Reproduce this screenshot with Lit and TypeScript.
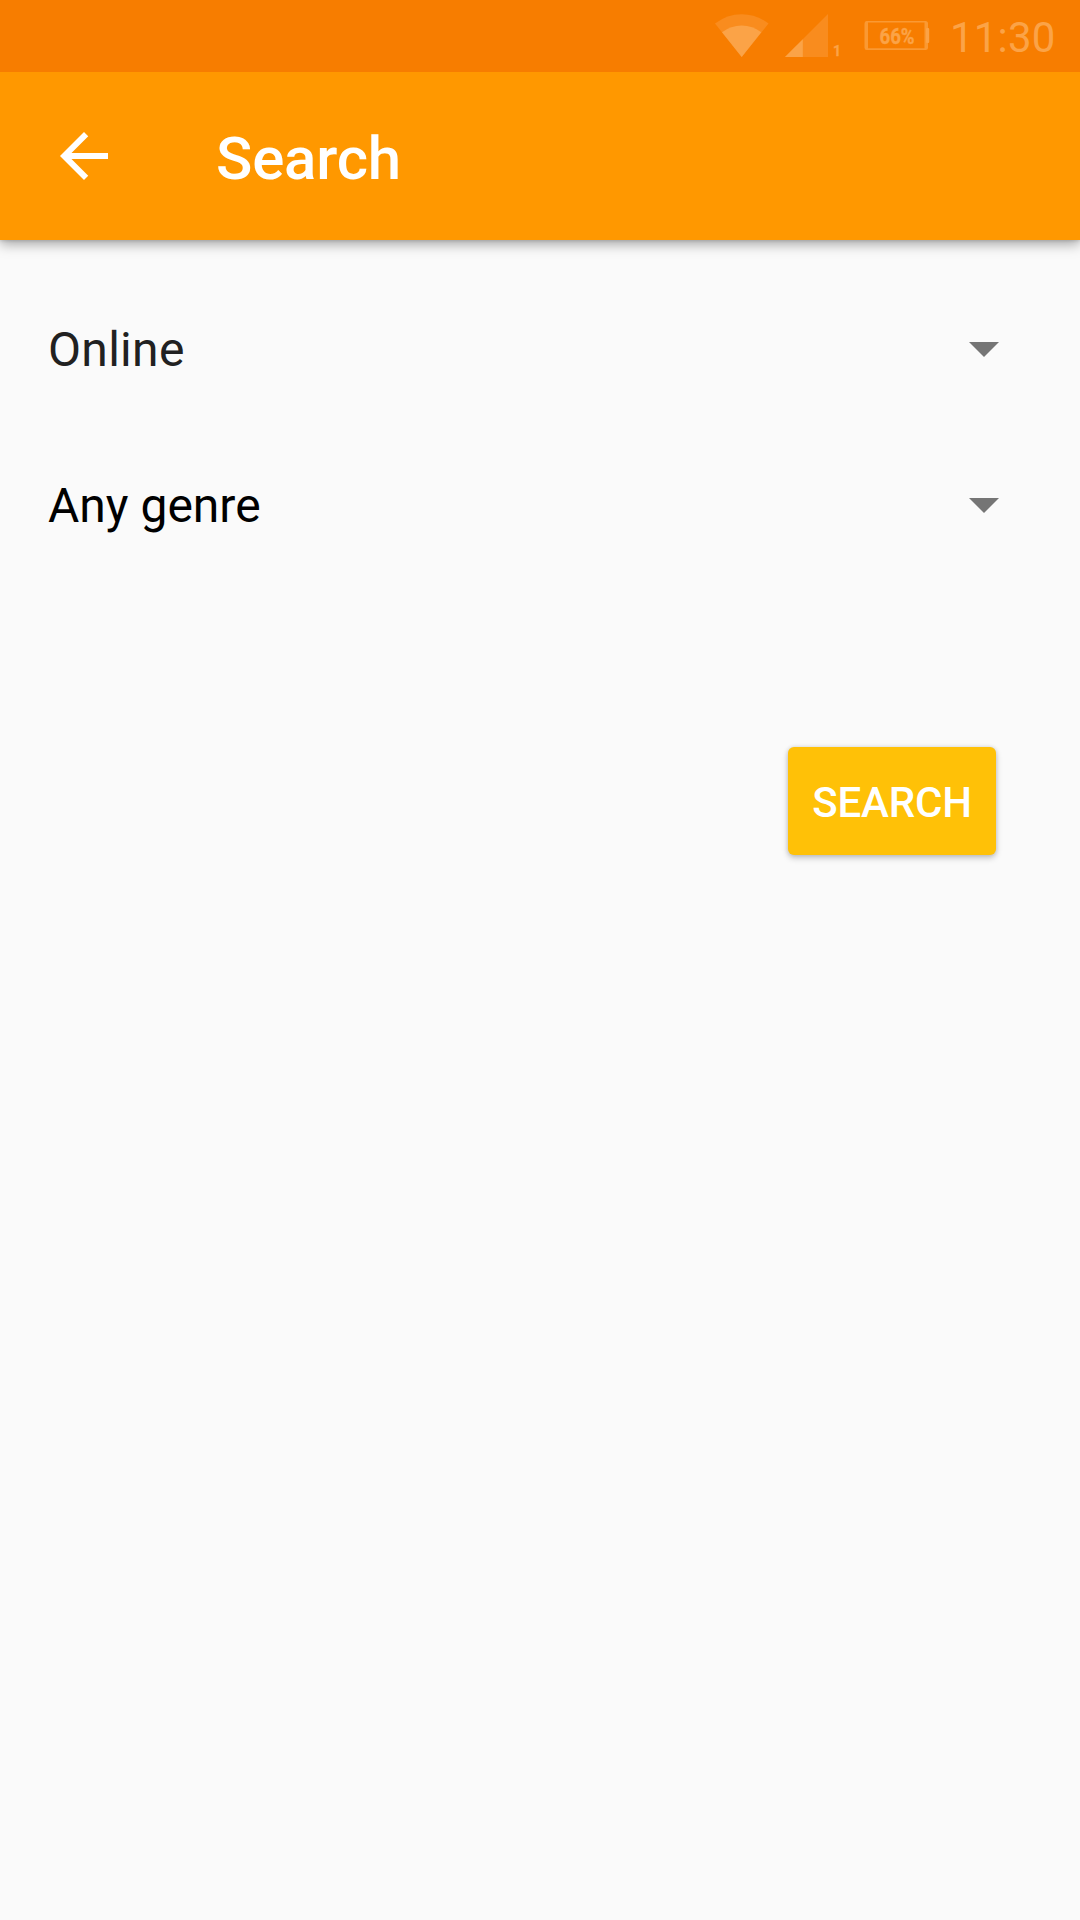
import { LitElement, html, css } from "lit";
import { customElement, property } from "lit/decorators.js";

@customElement("status-bar")
class StatusBar extends LitElement {
  static styles = css`
    :host {
      display: flex;
      justify-content: flex-end;
      position: relative;
      z-index: 1;
      height: 72px;
      background: #f77d00;
      color: #fba347;
      font-family: Roboto, sans-serif;
    }
    .icons {
      display: block;
      width: 230px;
      height: 72px;
    }
    .clock {
      width: 130px;
      box-sizing: border-box;
      padding: 2px 0 0 0;
      font-size: 42px;
      line-height: 72px;
      letter-spacing: 0.2px;
      white-space: nowrap;
    }
    .small {
      font-family: Roboto, sans-serif;
      font-weight: 700;
      stroke: #fba347;
      stroke-width: 0.4px;
    }
  `;

  render() {
    return html`
      <svg class="icons" viewBox="720 0 230 72" fill="#fba347" overflow="visible">
        <path d="M741.7 57 L715 23.6 Q727 14.3 741.7 14.3 Q756.5 14.3 768.5 23.6 Z" fill="#f98c1e" />
        <path d="M741.7 57 L722 32.2 Q731 25.5 741.7 25.5 Q752.5 25.5 761.3 32.2 Z" />
        <path d="M785 57 L828 57 L828 14 Z" fill="#f98c1e" />
        <path d="M785 57 L802.8 57 L802.8 39.2 Z" />
        <text class="small" x="833" y="56" font-size="15.5" textLength="8" lengthAdjust="spacingAndGlyphs">1</text>
        <path
          fill-rule="evenodd"
          d="M866.5 21 H925.5 Q928 21 928 23.500 V47.500 Q928 50 925.5 50 H866.5 Q864.5 50 864.5 47.500 V23.500 Q864.5 21 866.5 21 Z M868 22.500 V48.300 H924.500 V22.500 Z"
          opacity=".72"
        />
        <rect x="926" y="28" width="3.200" height="15" rx="1" />
        <text class="small" x="879.5" y="44" font-size="22" textLength="35" lengthAdjust="spacingAndGlyphs">66%</text>
      </svg>
      <span class="clock">11:30</span>
    `;
  }
}

@customElement("app-bar")
class AppBar extends LitElement {
  @property() heading = "";

  static styles = css`
    :host {
      display: flex;
      gap: 96px;
      height: 168px;
      box-sizing: border-box;
      padding: 48px 48px 0;
      background: #ff9800;
      color: #fff;
      font-family: Roboto, sans-serif;
      box-shadow: 0 4px 12px rgba(0, 0, 0, 0.35), 0 1px 3px rgba(0, 0, 0, 0.12);
    }
    .back {
      width: 72px;
      height: 72px;
      fill: #fff;
    }
    .title {
      margin: 0;
      padding-top: 2px;
      font-size: 60px;
      font-weight: 500;
      line-height: 74px;
      letter-spacing: -0.2px;
    }
  `;

  render() {
    return html`
      <svg class="back" viewBox="0 0 24 24">
        <path d="M20 11H7.830l5.590-5.590L12 4l-8 8 8 8 1.410-1.410L7.830 13H20v-2z" />
      </svg>
      <h1 class="title">${this.heading}</h1>
    `;
  }
}

@customElement("spinner-row")
class SpinnerRow extends LitElement {
  @property() value = "";

  static styles = css`
    :host {
      display: flex;
      align-items: center;
      justify-content: space-between;
      height: 156px;
      font-family: Roboto, sans-serif;
      font-size: 48px;
      line-height: 60px;
    }
    .caret {
      width: 72px;
      height: 72px;
      fill: #757575;
    }
  `;

  render() {
    return html`
      <span>${this.value}</span>
      <svg class="caret" viewBox="0 0 72 72"><path d="M21 28 H51 L36 43 Z" /></svg>
    `;
  }
}

@customElement("app-root")
class AppRoot extends LitElement {
  static styles = css`
    :host {
      display: flex;
      flex-direction: column;
      height: 1920px;
      background: #fafafa;
      font-family: Roboto, sans-serif;
    }
    .form {
      display: flex;
      flex-direction: column;
      padding: 32px 60px 0 48px;
    }
    .online {
      color: #212121;
      letter-spacing: 0.3px;
    }
    .genre {
      color: #000;
    }
    .search {
      align-self: flex-end;
      width: 208px;
      height: 108px;
      margin: 163px 24px 0 0;
      padding: 3px 0 0;
      border: 0;
      border-radius: 6px;
      background: #ffc107;
      color: #fff;
      font: 500 42px/50px Roboto, sans-serif;
      letter-spacing: -0.2px;
      box-shadow: 0 3px 6px rgba(0, 0, 0, 0.22), 0 0 4px rgba(0, 0, 0, 0.12);
    }
  `;

  render() {
    return html`
      <status-bar></status-bar>
      <app-bar heading="Search"></app-bar>
      <main class="form">
        <spinner-row class="online" value="Online"></spinner-row>
        <spinner-row class="genre" value="Any genre"></spinner-row>
        <button class="search">SEARCH</button>
      </main>
    `;
  }
}
